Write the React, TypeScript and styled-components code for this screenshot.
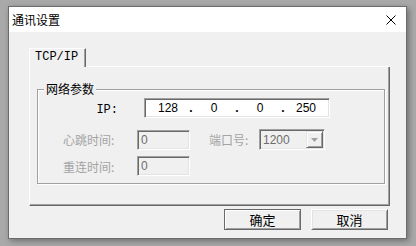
import React from "react";
import styled, { createGlobalStyle } from "styled-components";

const GlobalStyle = createGlobalStyle`
  html, body {
    margin: 0;
    padding: 0;
    background: #a9a9a9;
  }
  body {
    font-family: "Noto Sans CJK SC", "Noto Sans", sans-serif;
    font-size: 12px;
    color: #000;
  }
  * {
    box-sizing: border-box;
  }
`;

const Screen = styled.div`
  width: 416px;
  height: 246px;
  padding: 6px 0 0 8px;
  overflow: hidden;
`;

const Window = styled.div`
  width: 399px;
  height: 233px;
  border: 1px solid #6b6b6b;
  background: #f0f0f0;
  display: flex;
  flex-direction: column;
  box-shadow: 2px 2px 6px rgba(0, 0, 0, 0.35);
`;

const TitleBar = styled.div`
  height: 25px;
  background: #fff;
  display: flex;
  align-items: center;
  justify-content: space-between;
  padding: 0 10px 0 3px;
  line-height: 14px;
`;

const Title = styled.span`
  font-size: 12px;
`;

const CloseIcon = () => (
  <svg width="10" height="10" viewBox="0 0 10 10">
    <path d="M0.5 0.5 L9.5 9.5 M9.5 0.5 L0.5 9.5" stroke="#000" strokeWidth="1" />
  </svg>
);

const Body = styled.div`
  flex: 1;
  padding: 16px 0 0 20px;
  display: flex;
  flex-direction: column;
`;

const TabStrip = styled.div`
  display: flex;
  width: 361px;
  height: 19px;
`;

const Tab = styled.div`
  width: 57px;
  height: 19px;
  border-top: 1px solid #fff;
  border-left: 1px solid #fff;
  border-right: 1px solid #696969;
  box-shadow: inset -1px 0 0 #a0a0a0;
  font-family: "Liberation Mono", "DejaVu Sans Mono", monospace;
  font-size: 12px;
  line-height: 17px;
  padding-left: 5px;
`;

const TabFiller = styled.div`
  flex: 1;
  border-bottom: 1px solid #fff;
`;

const Panel = styled.div`
  width: 361px;
  height: 139px;
  border-left: 1px solid #fff;
  border-right: 1px solid #696969;
  border-bottom: 1px solid #696969;
  box-shadow: inset -1px -1px 0 #a0a0a0;
  padding: 0 0 0 7px;
`;

const Group = styled.fieldset`
  margin: 15px 0 0 0;
  padding: 0 0 7px 0;
  width: 348px;
  min-width: 0;
  border: 1px solid #a0a0a0;
  box-shadow: 1px 1px 0 #fff, inset 1px 1px 0 #fff;
`;

const Legend = styled.legend`
  margin-left: 6px;
  padding: 0 2px;
  background: #f0f0f0;
  line-height: 14px;
  font-size: 12px;
`;

const Row = styled.div<{ $top: number; $h: number }>`
  display: flex;
  align-items: center;
  margin-top: ${(p) => p.$top}px;
  height: ${(p) => p.$h}px;
`;

const Label = styled.span<{ $w: number; $pad?: number; $right?: boolean; $disabled?: boolean }>`
  width: ${(p) => p.$w}px;
  padding-left: ${(p) => p.$pad ?? 0}px;
  text-align: ${(p) => (p.$right ? "right" : "left")};
  color: ${(p) => (p.$disabled ? "#a3a3a3" : "#000")};
  font-size: 12px;
  white-space: nowrap;
  flex-shrink: 0;
`;

const Latin = styled.span`
  font-family: "Liberation Mono", "DejaVu Sans Mono", monospace;
`;

const Sunken = styled.div<{ $w: number; $h: number; $ml: number; $disabled?: boolean }>`
  width: ${(p) => p.$w}px;
  height: ${(p) => p.$h}px;
  margin-left: ${(p) => p.$ml}px;
  border: 1px solid;
  border-color: #a0a0a0 #fff #fff #a0a0a0;
  box-shadow: inset 1px 1px 0 #696969, inset -1px -1px 0 #e3e3e3;
  background: ${(p) => (p.$disabled ? "#f0f0f0" : "#fff")};
  color: ${(p) => (p.$disabled ? "#6d6d6d" : "#000")};
  display: flex;
  align-items: center;
  font-family: "Liberation Sans", Arial, sans-serif;
  font-size: 12px;
  flex-shrink: 0;
`;

const FieldText = styled.span`
  padding-left: 3px;
  flex: 1;
`;

const Octet = styled.span`
  width: 40px;
  text-align: center;
`;

const Dot = styled.span`
  width: 6px;
  text-align: center;
  font-weight: bold;
`;

const IpLead = styled.span`
  width: 3px;
`;

const DropButton = styled.div`
  width: 17px;
  height: 17px;
  margin-right: 1px;
  border: 1px solid;
  border-color: #e3e3e3 #696969 #696969 #e3e3e3;
  box-shadow: inset 1px 1px 0 #fff, inset -1px -1px 0 #a0a0a0;
  background: #f0f0f0;
  display: flex;
  align-items: center;
  justify-content: center;
`;

const ButtonRow = styled.div`
  width: 361px;
  display: flex;
  justify-content: flex-end;
  gap: 10px;
  padding-right: 2px;
  margin-top: 3px;
`;

const Button = styled.button<{ $default?: boolean }>`
  width: 77px;
  height: 21px;
  padding: 0;
  background: #f0f0f0;
  font-family: "Noto Sans CJK SC", sans-serif;
  font-size: 13px;
  line-height: 15px;
  color: #000;
  border: 1px solid;
  border-color: ${(p) => (p.$default ? "#696969" : "#fff #696969 #696969 #fff")};
  box-shadow: ${(p) =>
    p.$default
      ? "inset 1px 1px 0 #fff, inset -1px -1px 0 #a0a0a0"
      : "inset 1px 1px 0 #e3e3e3, inset -1px -1px 0 #a0a0a0"};
`;

const ip = ["128", "0", "0", "250"];

export default function App() {
  return (
    <>
      <GlobalStyle />
      <Screen>
        <Window>
          <TitleBar>
            <Title>通讯设置</Title>
            <CloseIcon />
          </TitleBar>
          <Body>
            <TabStrip>
              <Tab>TCP/IP</Tab>
              <TabFiller />
            </TabStrip>
            <Panel>
              <Group>
                <Legend>网络参数</Legend>
                <Row $top={2} $h={20}>
                  <Label $w={80} $right>
                    <Latin>IP:</Latin>
                  </Label>
                  <Sunken $w={186} $h={20} $ml={26}>
                    <IpLead />
                    {ip.map((n, i) => (
                      <React.Fragment key={i}>
                        <Octet>{n}</Octet>
                        {i < 3 && <Dot>.</Dot>}
                      </React.Fragment>
                    ))}
                  </Sunken>
                </Row>
                <Row $top={11} $h={21}>
                  <Label $w={99} $pad={25} $disabled>
                    心跳时间:
                  </Label>
                  <Sunken $w={53} $h={20} $ml={0} $disabled>
                    <FieldText>0</FieldText>
                  </Sunken>
                  <Label $w={50} $pad={0} $disabled style={{ marginLeft: 19 }}>
                    端口号:
                  </Label>
                  <Sunken $w={66} $h={21} $ml={0} $disabled>
                    <FieldText>1200</FieldText>
                    <DropButton>
                      <svg width="7" height="4" viewBox="0 0 7 4">
                        <path d="M0 0 H7 L3.5 4 Z" fill="#a0a0a0" />
                      </svg>
                    </DropButton>
                  </Sunken>
                </Row>
                <Row $top={6} $h={20}>
                  <Label $w={99} $pad={25} $disabled>
                    重连时间:
                  </Label>
                  <Sunken $w={53} $h={20} $ml={0} $disabled>
                    <FieldText>0</FieldText>
                  </Sunken>
                </Row>
              </Group>
            </Panel>
            <ButtonRow>
              <Button $default>确定</Button>
              <Button>取消</Button>
            </ButtonRow>
          </Body>
        </Window>
      </Screen>
    </>
  );
}
